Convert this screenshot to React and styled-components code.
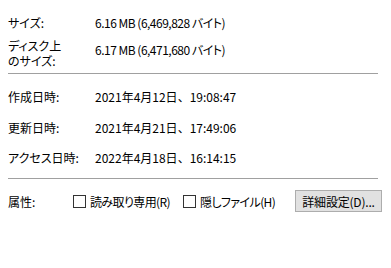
import React from "react";
import styled, { createGlobalStyle } from "styled-components";

const Global = createGlobalStyle`
  html, body { margin: 0; padding: 0; background: #fff; }
  body {
    font-family: "Noto Sans CJK JP", sans-serif;
    font-size: 12px;
    color: #000;
    font-feature-settings: "palt";
  }
`;

const Panel = styled.div`
  width: 391px;
  height: 268px;
  box-sizing: border-box;
  padding: 14px 9px 0 8px;
  display: flex;
  flex-direction: column;
`;

const Row = styled.div`
  flex: none;
  display: grid;
  grid-template-columns: 87px 1fr;
  align-items: ${(p) => (p.$top ? "start" : "center")};
  height: ${(p) => p.$h}px;
  margin-top: ${(p) => p.$mt || 0}px;
  line-height: 15px;
  white-space: nowrap;
`;

const Label = styled.div`
  line-height: 15px;
`;

const Value = styled.div`
  padding-top: ${(p) => p.$pt || 0}px;
  letter-spacing: ${(p) => p.$ls || 0}px;
`;

const Punct = styled.span`
  font-feature-settings: normal;
`;

const Separator = styled.div`
  flex: none;
  height: 1px;
  background: #a0a0a0;
  margin-top: ${(p) => p.$mt || 0}px;
  width: 370px;
`;

const AttrRow = styled.div`
  flex: none;
  display: flex;
  align-items: center;
  height: 22px;
  margin-top: ${(p) => p.$mt || 0}px;
  white-space: nowrap;
`;

const AttrLabel = styled.div`
  width: 65px;
`;

const Check = styled.label`
  display: flex;
  align-items: center;
  letter-spacing: -0.6px;
  margin-right: ${(p) => p.$mr || 0}px;
`;

const Box = styled.span`
  width: 11px;
  height: 11px;
  border: 1px solid #333;
  background: #fff;
  margin-right: 4px;
`;

const Button = styled.div`
  margin-left: auto;
  width: 85px;
  height: 20px;
  box-sizing: content-box;
  border: 1px solid #adadad;
  background: #e1e1e1;
  display: flex;
  align-items: center;
  justify-content: center;
  letter-spacing: -0.2px;
`;

const DateValue = ({ d, t }) => (
  <Value>
    {d}
    <Punct>、</Punct>
    {t}
  </Value>
);

export default function App() {
  return (
    <>
      <Global />
      <Panel>
        <Row $h={16}>
          <Label>サイズ:</Label>
          <Value $ls={-0.5}>6.16 MB (6,469,828 バイト)</Value>
        </Row>
        <Row $h={30} $mt={8} $top>
          <Label>
            ディスク上
            <br />
            のサイズ:
          </Label>
          <Value $pt={4} $ls={-0.5}>6.17 MB (6,471,680 バイト)</Value>
        </Row>
        <Separator $mt={5} />
        <Row $h={16} $mt={14}>
          <Label>作成日時:</Label>
          <DateValue d="2021年4月12日" t="19:08:47" />
        </Row>
        <Row $h={16} $mt={15}>
          <Label>更新日時:</Label>
          <DateValue d="2021年4月21日" t="17:49:06" />
        </Row>
        <Row $h={16} $mt={14}>
          <Label>アクセス日時:</Label>
          <DateValue d="2022年4月18日" t="16:14:15" />
        </Row>
        <Separator $mt={13} />
        <AttrRow $mt={11}>
          <AttrLabel>属性:</AttrLabel>
          <Check $mr={13}>
            <Box />
            読み取り専用(R)
          </Check>
          <Check>
            <Box />
            隠しファイル(H)
          </Check>
          <Button>詳細設定(D)...</Button>
        </AttrRow>
      </Panel>
    </>
  );
}
